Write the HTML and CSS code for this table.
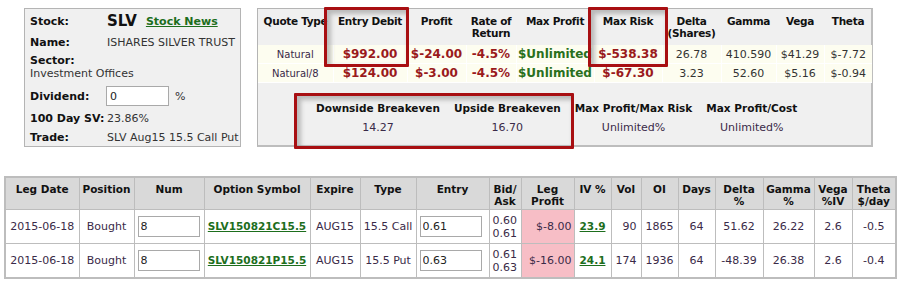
FILE: index.html
```html
<!DOCTYPE html>
<html>
<head>
<meta charset="utf-8">
<link rel="stylesheet" href="styles.css">
</head>
<body>
<div class="page">
  <div class="top">
    <div class="stock-box">
      <div class="row r-stock"><span class="lbl">Stock:</span><span class="sym">SLV</span><a class="news" href="#">Stock News</a></div>
      <div class="row r-name"><span class="lbl">Name:</span><span>ISHARES SILVER TRUST</span></div>
      <div class="sector"><span class="lbl">Sector:</span><span>Investment Offices</span></div>
      <div class="row r-div"><span class="lbl">Dividend:</span><input class="div-in" value="0"><span class="pct">%</span></div>
      <div class="row r-sv"><span class="lbl">100 Day SV:</span><span>23.86%</span></div>
      <div class="row r-trade"><span class="lbl">Trade:</span><span>SLV Aug15 15.5 Call Put</span></div>
    </div>
    <div class="quote-box">
      <table class="quote">
        <colgroup>
          <col class="c75"><col class="c74"><col class="c59"><col class="c50"><col class="c78"><col class="c68"><col class="c59"><col class="c55"><col class="c48"><col class="c48">
        </colgroup>
        <tr>
          <th>Quote Type</th><th>Entry Debit</th><th>Profit</th><th>Rate of Return</th><th>Max Profit</th><th>Max Risk</th><th>Delta (Shares)</th><th>Gamma</th><th>Vega</th><th>Theta</th>
        </tr>
        <tr>
          <td class="qt">Natural</td><td class="red">$992.00</td><td class="red">$-24.00</td><td class="red">-4.5%</td><td class="grn">$Unlimited</td><td class="red">$-538.38</td><td class="num">26.78</td><td class="num">410.590</td><td class="num">$41.29</td><td class="num">$-7.72</td>
        </tr>
        <tr>
          <td class="qt">Natural/8</td><td class="red">$124.00</td><td class="red">$-3.00</td><td class="red">-4.5%</td><td class="grn">$Unlimited</td><td class="red">$-67.30</td><td class="num">3.23</td><td class="num">52.60</td><td class="num">$5.16</td><td class="num">$-0.94</td>
        </tr>
      </table>
      <table class="be">
        <tr><th>Downside Breakeven</th><th>Upside Breakeven</th><th>Max Profit/Max Risk</th><th>Max Profit/Cost</th></tr>
        <tr><td>14.27</td><td>16.70</td><td>Unlimited%</td><td>Unlimited%</td></tr>
      </table>
      <div class="mark mark-entry"></div>
      <div class="mark mark-risk"></div>
      <div class="mark mark-be"></div>
    </div>
  </div>
  <table class="legs">
    <colgroup>
      <col class="w74"><col class="w55"><col class="w70"><col class="w106"><col class="w50"><col class="w56"><col class="w73"><col class="w32"><col class="w53"><col class="w37"><col class="w30"><col class="w37"><col class="w37"><col class="w48"><col class="w51"><col class="w38"><col class="w44">
    </colgroup>
    <tr>
      <th>Leg Date</th><th>Position</th><th>Num</th><th>Option Symbol</th><th>Expire</th><th>Type</th><th>Entry</th><th>Bid/ Ask</th><th>Leg Profit</th><th>IV %</th><th>Vol</th><th>OI</th><th>Days</th><th>Delta %</th><th>Gamma %</th><th>Vega %IV</th><th>Theta $/day</th>
    </tr>
    <tr>
      <td>2015-06-18</td><td>Bought</td><td class="in"><input class="cell-in" value="8"></td><td><a class="lnk" href="#">SLV150821C15.5</a></td><td>AUG15</td><td>15.5 Call</td><td class="in"><input class="cell-in" value="0.61"></td><td class="ba">0.60<br>0.61</td><td class="lp">$-8.00</td><td><a class="lnk" href="#">23.9</a></td><td class="r">90</td><td>1865</td><td>64</td><td>51.62</td><td>26.22</td><td>2.6</td><td>-0.5</td>
    </tr>
    <tr>
      <td>2015-06-18</td><td>Bought</td><td class="in"><input class="cell-in" value="8"></td><td><a class="lnk" href="#">SLV150821P15.5</a></td><td>AUG15</td><td>15.5 Put</td><td class="in"><input class="cell-in" value="0.63"></td><td class="ba">0.61<br>0.63</td><td class="lp">$-16.00</td><td><a class="lnk" href="#">24.1</a></td><td class="r">174</td><td>1936</td><td>64</td><td>-48.39</td><td>26.38</td><td>2.6</td><td>-0.4</td>
    </tr>
  </table>
</div>
</body>
</html>
```

FILE: styles.css
```css
html, body {
  margin: 0;
  padding: 0;
  background: #fff;
}
body {
  font-family: "DejaVu Sans", Verdana, sans-serif;
  font-size: 11px;
  color: #3a2a48;
}
.page {
  padding: 8px 0 0 4px;
  width: 896px;
}
.top {
  display: flex;
  align-items: flex-start;
  gap: 16px;
  margin-left: 20px;
  height: 139px;
}

/* left stock box */
.stock-box {
  box-sizing: border-box;
  width: 217px;
  height: 139px;
  background: #f0f0f0;
  border: 1px solid #b4b4b4;
  padding: 0 0 0 5px;
  display: flex;
  flex-direction: column;
  color: #333;
}
.row {
  display: flex;
  align-items: center;
  white-space: nowrap;
}
.lbl {
  font-weight: bold;
  color: #111;
  width: 77px;
  flex: none;
}
.r-stock { height: 24px; }
.r-name { height: 18px; }
.sector {
  display: flex;
  flex-direction: column;
  line-height: 13px;
  margin-top: 3px;
  height: 27px;
}
.sector .lbl { width: auto; }
.r-div { height: 24px; margin-top: 3px; }
.r-sv { height: 20px; }
.r-trade { height: 18px; }
.sym {
  font-weight: bold;
  font-size: 15px;
  color: #111;
  margin-right: 9px;
}
.news {
  font-weight: bold;
  color: #1d6e1d;
  text-decoration: underline;
}
.div-in {
  box-sizing: border-box;
  width: 63px;
  height: 20px;
  border: 1px solid #a9a9a9;
  background: #fff;
  font: 11px "DejaVu Sans", Verdana, sans-serif;
  color: #222;
  padding: 0 3px;
  margin: 0 6px 0 -1px;
}
.pct { color: #333; }

/* quote box */
.quote-box {
  position: relative;
  box-sizing: border-box;
  width: 616px;
  height: 139px;
  background: #f0f0f0;
  border: 1px solid #b4b4b4;
  border-right: 2px solid #bdbdbd;
  border-bottom: 2px solid #bdbdbd;
}
.quote {
  border-collapse: collapse;
  table-layout: fixed;
  width: 613px;
}
.c75 { width: 75px; } .c74 { width: 74px; } .c59 { width: 59px; } .c50 { width: 50px; }
.c78 { width: 78px; } .c68 { width: 68px; } .c55 { width: 55px; } .c48 { width: 48px; }
.quote th {
  font-size: 10.5px;
  letter-spacing: -0.3px;
  font-weight: bold;
  color: #111;
  vertical-align: top;
  line-height: 12px;
  padding: 6px 0 0;
  height: 30px;
  white-space: normal;
}
.quote td {
  background: #fdfdf0;
  border: 1px solid #fff;
  text-align: center;
  height: 18px;
  padding: 0;
  white-space: nowrap;
}
.quote tr:nth-child(2) td { border-top: 0; }
.quote td:first-child { border-left: 0; }
.quote td:last-child { border-right: 0; }
.quote .qt { font-size: 10px; color: #3a2a48; }
.quote .red { font-weight: bold; font-size: 12px; color: #9a1a1c; }
.quote .grn { font-weight: bold; font-size: 12px; color: #2a701c; }
.quote .num { font-size: 11px; color: #333; }

.be {
  border-collapse: collapse;
  margin: 19px 0 0 51px;
}
.be th {
  font-size: 10.5px;
  font-weight: bold;
  color: #111;
  padding: 0 7px;
  line-height: 13px;
  white-space: nowrap;
}
.be td {
  text-align: center;
  padding: 6px 0 0;
  line-height: 13px;
  color: #3a2a48;
}

.mark {
  position: absolute;
  border: 3px solid #a80f12;
  box-shadow: inset 3px 3px 4px 1px rgba(150, 150, 150, 0.6);
  border-radius: 1px;
  box-sizing: border-box;
}
.mark-entry { left: 66px; top: -2px; width: 85px; height: 60px; }
.mark-risk { left: 330px; top: -2px; width: 80px; height: 60px; }
.mark-be { left: 36px; top: 84px; width: 280px; height: 56px; }

/* legs table */
.legs {
  margin-top: 29px;
  border-collapse: collapse;
  table-layout: fixed;
  width: 891px;
  border: 2px solid #bdbdbd;
}
.w74 { width: 74px; } .w55 { width: 55px; } .w70 { width: 70px; } .w106 { width: 106px; }
.w50 { width: 50px; } .w56 { width: 56px; } .w73 { width: 73px; } .w32 { width: 32px; }
.w53 { width: 53px; } .w37 { width: 37px; } .w30 { width: 30px; } .w48 { width: 48px; }
.w51 { width: 51px; } .w38 { width: 38px; } .w44 { width: 44px; }
.legs th {
  background: #d9d9d9;
  border: 1px solid #bdbdbd;
  font-size: 10.5px;
  font-weight: bold;
  color: #111;
  vertical-align: top;
  line-height: 12px;
  padding: 5px 1px 0;
  height: 26px;
}
.legs td {
  border: 1px solid #bdbdbd;
  text-align: center;
  height: 33px;
  padding: 0 1px;
  white-space: nowrap;
  color: #3a2a48;
}
.legs td.in { padding: 0 3px; text-align: left; }
.legs td.r { text-align: right; padding-right: 4px; }
.legs td.ba { line-height: 13px; text-align: left; padding-left: 3px; }
.legs td.lp { background: #f7bec6; text-align: right; padding-right: 2px; }
.cell-in {
  box-sizing: border-box;
  width: 62px;
  height: 21px;
  border: 1px solid #a9a9a9;
  background: #fff;
  font: 11px "DejaVu Sans", Verdana, sans-serif;
  color: #222;
  padding: 0 2px;
}
.lnk {
  font-weight: bold;
  font-size: 10.5px;
  color: #1d6e1d;
  text-decoration: underline;
}
```
